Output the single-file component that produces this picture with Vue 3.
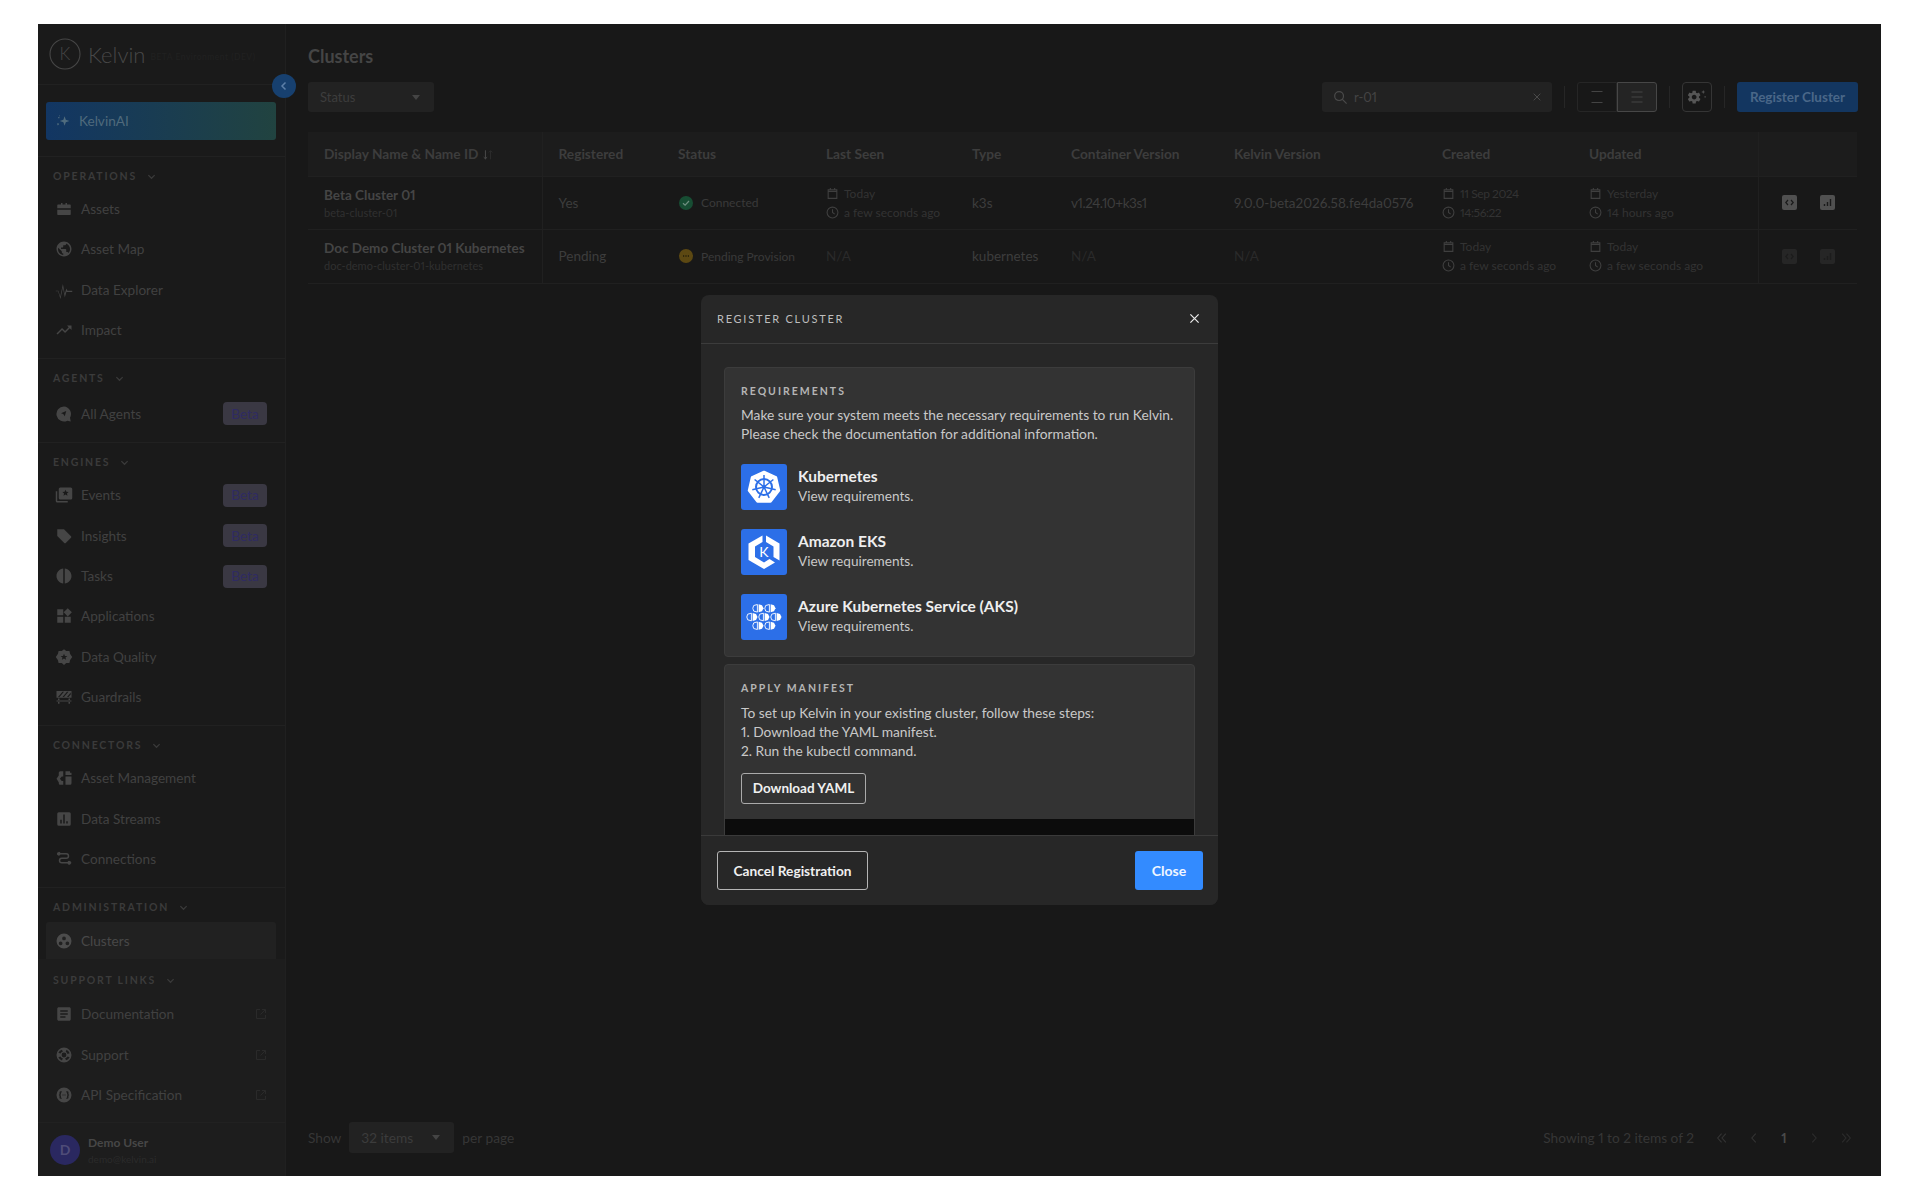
<script setup>
const P = {
  assets: 'M8 4h2v2h4V4h2v2h4a1 1 0 0 1 1 1v4H3V7a1 1 0 0 1 1-1h4zM3 13h18v6a1 1 0 0 1-1 1H4a1 1 0 0 1-1-1z',
  globe: 'M12 2C6.48 2 2 6.48 2 12s4.48 10 10 10 10-4.48 10-10S17.52 2 12 2zm-1 17.93c-3.95-.49-7-3.85-7-7.93 0-.62.08-1.21.21-1.79L9 15v1c0 1.1.9 2 2 2v1.93zm6.9-2.54c-.26-.81-1-1.39-1.9-1.39h-1v-3c0-.55-.45-1-1-1H8v-2h2c.55 0 1-.45 1-1V7h2c1.1 0 2-.9 2-2v-.41c2.93 1.19 5 4.06 5 7.41 0 2.08-.8 3.97-2.1 5.39z',
  wave: 'M1 13h3.500l2.500 8 3.500-17 2.500 13 2.200-7 1.300 3h6.500v1.600h-7.500l-.2-.6-2.200 8-2.600-13.500-3.200 15.500-3.200-10.400H1z',
  trend: 'M16 6l2.29 2.29-4.88 4.88-4-4L2 16.59 3.41 18l6-6 4 4 6.3-6.29L22 12V6z',
  agent: 'M12 2a10 10 0 1 0 4.500 18.900L21 22l-1-5A10 10 0 0 0 12 2zm3 6-2 7-2-3-3-1z',
  events: 'M3 7H1v13a2 2 0 0 0 2 2h14v-2H3zM21 2H7a2 2 0 0 0-2 2v12a2 2 0 0 0 2 2h14a2 2 0 0 0 2-2V4a2 2 0 0 0-2-2zm-7 3 1.200 2.800 3 .2-2.300 2 .8 3-2.700-1.600L11.300 13l.8-3-2.300-2 3-.2z',
  label: 'M3 3h9l9.300 9.300a1.500 1.500 0 0 1 0 2.100l-6.900 6.900a1.500 1.500 0 0 1-2.100 0L3 12z',
  tasks: 'M11 2.100v19.800C6 21.400 2 17.200 2 12s4-9.400 9-9.900zm2 0c5 .5 9 4.700 9 9.900s-4 9.400-9 9.900z',
  apps: 'M3 3h8v8H3zM3 13h8v8H3zM13 13h8v8h-8zM17 1.500 22.500 7 17 12.500 11.500 7z',
  quality: 'M12 1.500 15 4h4.200l1 4L23 12l-2.800 4-1 4H15l-3 2.500L9 20H4.800l-1-4L1 12l2.800-4 1-4H9zm0 6-1.300 3-3.200.2 2.500 2-.8 3.100 2.800-1.700 2.800 1.700-.8-3.100 2.500-2-3.200-.2z',
  guard: 'M2 4h20v9H2zM4 14h2v7H4zM18 14h2v7h-2zM2 16.500h20V18H2zM6 12l6-7h-2l-6 7zM12 12l6-7h-2l-6 7zM18 12l3-3.500V6l-5 6z',
  mgmt: 'M14 8V3h6v2h2v3zM14 10h8v9a2 2 0 0 1-2 2h-6zM11 3v7H9L6.500 13 9 16h2v5H7a2 2 0 0 1-2-2v-1.500L2 13l3-4.500V5a2 2 0 0 1 2-2z',
  streams: 'M5 3h14a2 2 0 0 1 2 2v14a2 2 0 0 1-2 2H5a2 2 0 0 1-2-2V5a2 2 0 0 1 2-2zm2 10v5h2v-5zm4-7v12h2V6zm4 9v3h2v-3z',
  conn: 'M5 2.500A2.500 2.500 0 0 1 7.300 4H15a4 4 0 0 1 0 8H9a2 2 0 0 0 0 4h7.700a2.500 2.500 0 1 1 0 2H9a4 4 0 0 1 0-8h6a2 2 0 0 0 0-4H7.300A2.500 2.500 0 1 1 5 2.500z',
  clusters: 'M12 2a10 10 0 1 0 0 20 10 10 0 0 0 0-20zm0 4a2.500 2.500 0 1 1 0 5 2.500 2.500 0 0 1 0-5zM7.500 12.500a2.500 2.500 0 1 1 0 5 2.500 2.500 0 0 1 0-5zm9 0a2.500 2.500 0 1 1 0 5 2.500 2.500 0 0 1 0-5z',
  doc: 'M19 3H5c-1.100 0-2 .9-2 2v14c0 1.100.9 2 2 2h14c1.100 0 2-.9 2-2V5c0-1.100-.9-2-2-2zm-5 14H7v-2h7v2zm3-4H7v-2h10v2zm0-4H7V7h10v2z',
  support: 'M12 2a10 10 0 1 0 0 20 10 10 0 0 0 0-20zm7.500 7.700-2.800 1.100a5 5 0 0 0-2.400-3.100l1.100-2.800a8 8 0 0 1 4.100 4.800zM12 15.200a3.200 3.200 0 1 1 0-6.400 3.200 3.200 0 0 1 0 6.400zM9.300 4.900l1.100 2.800A5 5 0 0 0 7.300 10L4.500 8.900a8 8 0 0 1 4.800-4zM4.500 15.100l2.800-1.100a5 5 0 0 0 3.100 2.400l-1.100 2.800a8 8 0 0 1-4.800-4.100zm10.200 4-1.100-2.800a5 5 0 0 0 3.100-2.300l2.800 1.100a8 8 0 0 1-4.800 4z',
  api: 'M12 2a10 10 0 1 0 0 20 10 10 0 0 0 0-20zM9 7v1.500H8V11l-1 1 1 1v2.500h1V17H7.500A1.500 1.500 0 0 1 6 15.500V13l-1-1 1-1V8.500A1.500 1.500 0 0 1 7.500 7zm6 0h1.500A1.500 1.500 0 0 1 18 8.500V11l1 1-1 1v2.500a1.500 1.500 0 0 1-1.500 1.500H15v-1.500h1V13l1-1-1-1V8.500h-1zM10 11.300h1.400v1.400H10zm2.600 0H14v1.400h-1.400z',
  gear: 'M19.140 12.940c.04-.3.06-.61.06-.94 0-.32-.02-.64-.07-.94l2.030-1.580c.18-.14.23-.41.12-.61l-1.920-3.320c-.12-.22-.37-.29-.59-.22l-2.390.96c-.5-.38-1.030-.7-1.620-.94l-.36-2.540c-.04-.24-.24-.41-.48-.41h-3.840c-.24 0-.43.17-.47.41l-.36 2.540c-.59.24-1.130.57-1.620.94l-2.390-.96c-.22-.08-.47 0-.59.22L2.740 8.870c-.12.21-.08.47.12.61l2.030 1.580c-.05.3-.09.63-.09.94s.02.64.07.94l-2.030 1.580c-.18.14-.23.41-.12.61l1.920 3.320c.12.22.37.29.59.22l2.390-.96c.5.38 1.030.7 1.620.94l.36 2.540c.05.24.24.41.48.41h3.840c.24 0 .44-.17.47-.41l.36-2.540c.59-.24 1.130-.56 1.620-.94l2.390.96c.22.08.47 0 .59-.22l1.920-3.320c.12-.22.07-.47-.12-.61l-2.010-1.580zM12 15.600c-1.980 0-3.600-1.620-3.600-3.600s1.620-3.600 3.600-3.600 3.600 1.620 3.600 3.600-1.620 3.600-3.600 3.600z'
}
const sections = [
  { title: 'OPERATIONS', items: [['assets', 'Assets'], ['globe', 'Asset Map'], ['wave', 'Data Explorer'], ['trend', 'Impact']] },
  { title: 'AGENTS', tall: true, items: [['agent', 'All Agents', 'Beta']] },
  { title: 'ENGINES', items: [['events', 'Events', 'Beta'], ['label', 'Insights', 'Beta'], ['tasks', 'Tasks', 'Beta'], ['apps', 'Applications'], ['quality', 'Data Quality'], ['guard', 'Guardrails']] },
  { title: 'CONNECTORS', items: [['mgmt', 'Asset Management'], ['streams', 'Data Streams'], ['conn', 'Connections']] }
]
const support = [['doc', 'Documentation'], ['support', 'Support'], ['api', 'API Specification']]
const headers = ['Registered', 'Status', 'Last Seen', 'Type', 'Container Version', 'Kelvin Version', 'Created', 'Updated', '']
const rows = [
  { name: 'Beta Cluster 01', id: 'beta-cluster-01', reg: 'Yes', st: 'Connected', ok: true, seen: ['Today', 'a few seconds ago'], type: 'k3s', cv: 'v1.24.10+k3s1', kv: '9.0.0-beta2026.58.fe4da0576', created: ['11 Sep 2024', '14:56:22'], updated: ['Yesterday', '14 hours ago'] },
  { name: 'Doc Demo Cluster 01 Kubernetes', id: 'doc-demo-cluster-01-kubernetes', reg: 'Pending', st: 'Pending Provision', ok: false, seen: null, type: 'kubernetes', cv: null, kv: null, created: ['Today', 'a few seconds ago'], updated: ['Today', 'a few seconds ago'] }
]
const cubes = [[17, 14.300], [29, 14.300], [11, 23], [23, 23], [35, 23], [17, 31.700], [29, 31.700]]
const spokes = [0, 51.430, 102.860, 154.290, 205.710, 257.140, 308.570]
const services = [['k8s', 'Kubernetes'], ['eks', 'Amazon EKS'], ['aks', 'Azure Kubernetes Service (AKS)']]
</script>

<template>
  <div class="page">
    <div class="app">
      <aside class="side">
        <div class="brand">
          <svg class="logo" viewBox="0 0 32 32" width="32" height="32">
            <circle cx="16" cy="16" r="15" fill="none" stroke="#464646" stroke-width="1.100" />
            <text x="16" y="22" text-anchor="middle" font-size="17" fill="#464646" class="logo-k">K</text>
          </svg>
          <span class="brand-name">Kelvin</span>
          <span class="brand-env">BETA Environment (DEV)</span>
        </div>
        <div class="collapse">
          <svg viewBox="0 0 12 12" width="12" height="12"><path d="M7.500 2.500 4 6l3.500 3.500" fill="none" stroke="#5d7fa8" stroke-width="1.500" /></svg>
        </div>
        <div class="ai-wrap">
          <div class="ai">
            <svg viewBox="0 0 20 20" width="16" height="16"><path d="M12 4l1.500 4.500L18 10l-4.500 1.500L12 16l-1.500-4.500L6 10l4.500-1.500zM4 5h1.500v1.500H4zM2.500 13.500 4 12.500 5 14l-1.500 1.500zM5 3h1v1H5z" fill="#506c7e" /></svg>
            <span>KelvinAI</span>
          </div>
        </div>
        <section v-for="s in sections" :key="s.title" class="sec">
          <div class="sec-title">{{ s.title }}
            <svg viewBox="0 0 10 10" width="9" height="9"><path d="M1.500 3.500 5 7l3.500-3.500" fill="none" stroke="#3a3a3a" stroke-width="1.400" /></svg>
          </div>
          <div v-for="it in s.items" :key="it[1]" class="item" :class="{ tall: s.tall }">
            <svg viewBox="0 0 24 24" width="18" height="18"><path :d="P[it[0]]" fill="#464646" fill-rule="evenodd" /></svg>
            <span class="item-name">{{ it[1] }}</span>
            <span v-if="it[2]" class="beta">{{ it[2] }}</span>
          </div>
        </section>
        <section class="sec admin">
          <div class="sec-title">ADMINISTRATION
            <svg viewBox="0 0 10 10" width="9" height="9"><path d="M1.500 3.500 5 7l3.500-3.500" fill="none" stroke="#3a3a3a" stroke-width="1.400" /></svg>
          </div>
          <div class="item active">
            <svg viewBox="0 0 24 24" width="18" height="18"><path :d="P.clusters" fill="#4c4c4c" fill-rule="evenodd" /></svg>
            <span class="item-name">Clusters</span>
          </div>
        </section>
        <section class="support">
          <div class="sec-title">SUPPORT LINKS
            <svg viewBox="0 0 10 10" width="9" height="9"><path d="M1.500 3.500 5 7l3.500-3.500" fill="none" stroke="#3a3a3a" stroke-width="1.400" /></svg>
          </div>
          <div v-for="it in support" :key="it[1]" class="item">
            <svg viewBox="0 0 24 24" width="18" height="18"><path :d="P[it[0]]" fill="#464646" fill-rule="evenodd" /></svg>
            <span class="item-name">{{ it[1] }}</span>
            <svg class="ext" viewBox="0 0 12 12" width="12" height="12"><path d="M5 1.500H1.500v9h9V7M7 1.500h3.500V5M10.500 1.500 5.500 6.500" fill="none" stroke="#2a2a2a" stroke-width="1" /></svg>
          </div>
        </section>
        <div class="user">
          <div class="avatar">D</div>
          <div class="user-text">
            <div class="user-name">Demo User</div>
            <div class="user-mail">demo@kelvin.ai</div>
          </div>
        </div>
      </aside>

      <main class="main">
        <h1 class="title">Clusters</h1>
        <div class="toolbar">
          <div class="select status-sel"><span>Status</span><i class="caret"></i></div>
          <div class="tools">
            <div class="search">
              <svg viewBox="0 0 16 16" width="15" height="15"><circle cx="6.500" cy="6.500" r="4.700" fill="none" stroke="#4a4a4a" stroke-width="1.300" /><path d="M10 10l4.500 4.500" stroke="#4a4a4a" stroke-width="1.300" /></svg>
              <span class="q">r-01</span>
              <svg viewBox="0 0 12 12" width="10" height="10"><path d="M2 2l8 8M10 2l-8 8" stroke="#4a4a4a" stroke-width="1.200" /></svg>
            </div>
            <i class="vsep"></i>
            <div class="toggle">
              <div class="seg"><svg viewBox="0 0 16 16" width="16" height="16"><path d="M2.500 2.500h11M2.500 13.500h11" stroke="#444" stroke-width="1.100" /></svg></div>
              <div class="seg on"><svg viewBox="0 0 16 16" width="16" height="16"><path d="M2.500 3h11M2.500 8h11M2.500 13h11" stroke="#444" stroke-width="1.100" /></svg></div>
            </div>
            <i class="vsep"></i>
            <div class="cog">
              <svg viewBox="0 0 24 24" width="20" height="20"><g transform="translate(-1 2.500) scale(.8)"><path :d="P.gear" fill="#565656" fill-rule="evenodd" /></g><path d="M19.500 3.500l.7 1.800 1.800.7-1.800.7-.7 1.800-.7-1.800-1.800-.7 1.800-.7zM21 11h1.500v1.500H21z" fill="#565656" /></svg>
            </div>
            <i class="vsep"></i>
            <div class="register">Register Cluster</div>
          </div>
        </div>

        <div class="table-wrap">
          <table class="tbl">
            <colgroup>
              <col style="width:234px" /><col style="width:120px" /><col style="width:148px" /><col style="width:146px" /><col style="width:99px" /><col style="width:163px" /><col style="width:208px" /><col style="width:147px" /><col style="width:185px" /><col style="width:99px" />
            </colgroup>
            <thead>
              <tr>
                <th class="first">Display Name &amp; Name ID
                  <svg viewBox="0 0 14 14" width="12" height="12"><path d="M4 1.500v10M2 9.500l2 2 2-2" fill="none" stroke="#4d4d4d" stroke-width="1.100" /><path d="M10 12V2M8 4l2-2 2 2" fill="none" stroke="#2e2e2e" stroke-width="1.100" /></svg>
                </th>
                <th v-for="(h, i) in headers" :key="i" :class="{ act: i === 8 }">{{ h }}</th>
              </tr>
            </thead>
            <tbody>
              <tr v-for="(r, i) in rows" :key="r.id">
                <td class="first"><div class="nm">{{ r.name }}</div><div class="nid">{{ r.id }}</div></td>
                <td>{{ r.reg }}</td>
                <td>
                  <div class="st">
                    <svg v-if="r.ok" viewBox="0 0 14 14" width="14" height="14"><circle cx="7" cy="7" r="7" fill="#174d33" /><path d="M4 7.200l2.100 2L10 5" fill="none" stroke="#6f8f80" stroke-width="1.200" /></svg>
                    <svg v-else viewBox="0 0 14 14" width="14" height="14"><circle cx="7" cy="7" r="7" fill="#5c4812" /><path d="M4 7h1.200M6.400 7h1.200M8.800 7H10" stroke="#231d0a" stroke-width="1.400" /></svg>
                    <span>{{ r.st }}</span>
                  </div>
                </td>
                <td>
                  <div v-if="r.seen" class="dates">
                    <div><svg viewBox="0 0 12 12" width="13" height="13"><path d="M2 2.500h8v8H2zM2 4h8M4 1v2M8 1v2" fill="none" stroke="#3f3f3f" /></svg>{{ r.seen[0] }}</div>
                    <div><svg viewBox="0 0 12 12" width="13" height="13"><circle cx="6" cy="6" r="5" fill="none" stroke="#3f3f3f" /><path d="M6 3v3l2 1.500" fill="none" stroke="#3f3f3f" /></svg>{{ r.seen[1] }}</div>
                  </div>
                  <span v-else class="na">N/A</span>
                </td>
                <td>{{ r.type }}</td>
                <td><span v-if="r.cv" class="tight">{{ r.cv }}</span><span v-else class="na">N/A</span></td>
                <td><span v-if="r.kv">{{ r.kv }}</span><span v-else class="na">N/A</span></td>
                <td>
                  <div class="dates">
                    <div><svg viewBox="0 0 12 12" width="13" height="13"><path d="M2 2.500h8v8H2zM2 4h8M4 1v2M8 1v2" fill="none" stroke="#3f3f3f" /></svg><span :class="{ tight: i === 0 }">{{ r.created[0] }}</span></div>
                    <div><svg viewBox="0 0 12 12" width="13" height="13"><circle cx="6" cy="6" r="5" fill="none" stroke="#3f3f3f" /><path d="M6 3v3l2 1.500" fill="none" stroke="#3f3f3f" /></svg><span :class="{ tight: i === 0 }">{{ r.created[1] }}</span></div>
                  </div>
                </td>
                <td>
                  <div class="dates">
                    <div><svg viewBox="0 0 12 12" width="13" height="13"><path d="M2 2.500h8v8H2zM2 4h8M4 1v2M8 1v2" fill="none" stroke="#3f3f3f" /></svg>{{ r.updated[0] }}</div>
                    <div><svg viewBox="0 0 12 12" width="13" height="13"><circle cx="6" cy="6" r="5" fill="none" stroke="#3f3f3f" /><path d="M6 3v3l2 1.500" fill="none" stroke="#3f3f3f" /></svg>{{ r.updated[1] }}</div>
                  </div>
                </td>
                <td class="act">
                  <div class="acts" :class="{ off: i === 1 }">
                    <svg viewBox="0 0 15 15" width="15" height="15"><rect width="15" height="15" rx="2" class="afill" /><path d="M6 5 3.800 7.500 6 10M9 5l2.200 2.500L9 10" fill="none" class="astroke" stroke-width="1.200" /></svg>
                    <svg viewBox="0 0 15 15" width="15" height="15"><rect width="15" height="15" rx="2" class="afill" /><path d="M4.500 9v2M7.500 7v4M10.500 4v7" fill="none" class="astroke" stroke-width="1.400" /></svg>
                  </div>
                </td>
              </tr>
            </tbody>
          </table>
        </div>

        <div class="pager">
          <div class="pg-left">
            <span>Show</span>
            <div class="select count-sel"><span>32 items</span><i class="caret"></i></div>
            <span>per page</span>
          </div>
          <div class="pg-right">
            <span class="showing">Showing 1 to 2 items of 2</span>
            <div class="pg-nav">
              <svg viewBox="0 0 14 14" width="12" height="12"><path d="M6.500 2 2 7l4.500 5M11.500 2 7 7l4.500 5" fill="none" stroke="#333" stroke-width="1.300" /></svg>
              <svg viewBox="0 0 14 14" width="12" height="12"><path d="M9 2 4.500 7 9 12" fill="none" stroke="#333" stroke-width="1.300" /></svg>
              <b>1</b>
              <svg viewBox="0 0 14 14" width="12" height="12"><path d="M5 2l4.500 5L5 12" fill="none" stroke="#2c2c2c" stroke-width="1.300" /></svg>
              <svg viewBox="0 0 14 14" width="12" height="12"><path d="M2.500 2 7 7l-4.500 5M7.500 2 12 7l-4.500 5" fill="none" stroke="#2c2c2c" stroke-width="1.300" /></svg>
            </div>
          </div>
        </div>
      </main>

      <div class="modal">
        <header class="m-head">
          <span>REGISTER CLUSTER</span>
          <svg viewBox="0 0 12 12" width="11" height="11"><path d="M1.500 1.500l9 9M10.500 1.500l-9 9" stroke="#e6e6e6" stroke-width="1.400" /></svg>
        </header>
        <div class="m-body">
          <div class="card">
            <h3>REQUIREMENTS</h3>
            <p>Make sure your system meets the necessary requirements to run Kelvin.<br />Please check the documentation for additional information.</p>
            <div class="svc" v-for="s in services" :key="s[0]">
              <svg class="svc-ic" viewBox="0 0 46 46" width="46" height="46">
                <rect width="46" height="46" rx="3" fill="#2c6fe8" />
                <g v-if="s[0] === 'k8s'">
                  <path d="M23 8 35 13.500 38 26.500 29.500 37.500H16.500L8 26.500 11 13.500Z" fill="#fff" stroke="#fff" stroke-width="2.500" stroke-linejoin="round" />
                  <circle cx="23" cy="23" r="8" fill="none" stroke="#2c6fe8" stroke-width="2" />
                  <circle cx="23" cy="23" r="2" fill="#2c6fe8" />
                  <path v-for="a in spokes" :key="a" d="M23 23V11" stroke="#2c6fe8" stroke-width="1.500" :transform="`rotate(${a} 23 23)`" />
                </g>
                <g v-else-if="s[0] === 'eks'">
                  <path d="M21.500 6.500 7.500 14.500V31L23 40 34 33.500 28.500 30 23 33.500 14 28V17.500L21.500 13Z" fill="#fff" />
                  <path d="M25 6.500 38.500 14.500V31.500L32.500 28V17.500L25 13Z" fill="#fff" />
                  <text x="23" y="28" text-anchor="middle" font-size="14" fill="#fff" class="svc-k">K</text>
                </g>
                <g v-else>
                  <g v-for="(c, i) in cubes" :key="i" :transform="`translate(${c[0]} ${c[1]})`">
                    <path d="M-.6-3.800-4.300-2.800-5.200 0-4.300 2.800-.6 3.800Z" fill="none" stroke="#fff" stroke-width=".9" />
                    <path d="M.6-4 4-3 5.500 0 4 3 .6 4Z" fill="#fff" />
                  </g>
                </g>
              </svg>
              <div class="svc-text">
                <div class="svc-name">{{ s[1] }}</div>
                <div class="svc-sub">View requirements.</div>
              </div>
            </div>
          </div>
          <div class="card manifest">
            <h3>APPLY MANIFEST</h3>
            <p>To set up Kelvin in your existing cluster, follow these steps:<br />1. Download the YAML manifest.<br />2. Run the kubectl command.</p>
            <div class="dl">Download YAML</div>
            <div class="code"></div>
          </div>
        </div>
        <footer class="m-foot">
          <div class="btn-out">Cancel Registration</div>
          <div class="btn-pri">Close</div>
        </footer>
      </div>
    </div>
  </div>
</template>

<style>
html, body { margin: 0; background: #fff; }
</style>

<style scoped>
.page { padding: 24px 39px 24px 38px; height: 1200px; box-sizing: border-box; font-family: "Lato", "Liberation Sans", sans-serif; font-feature-settings: "pnum"; }
.app { position: relative; display: flex; height: 1152px; background: #181818; overflow: hidden; }

.side { position: relative; width: 247px; flex: none; display: flex; flex-direction: column; background: #1a1a1a; border-right: 1px solid #202020; }
.brand { height: 61px; box-sizing: border-box; flex: none; display: flex; align-items: center; padding: 0 0 0 11px; border-bottom: 1px solid #212121; white-space: nowrap; overflow: hidden; }
.logo-k { font-family: "Lato", sans-serif; font-weight: 300; }
.brand-name { margin-left: 7px; font-size: 22px; font-weight: 300; color: #484848; }
.brand-env { margin: 6px 0 0 5px; font-size: 8.500px; letter-spacing: .5px; color: #212121; }
.collapse { position: absolute; left: 234px; top: 50px; width: 24px; height: 24px; border-radius: 50%; background: #17406f; display: flex; align-items: center; justify-content: center; z-index: 2; }
.ai-wrap { flex: none; padding: 17px 9px 16px 8px; border-bottom: 1px solid #212121; }
.ai { height: 38px; display: flex; align-items: center; gap: 8px; padding-left: 9px; border-radius: 3px; background: linear-gradient(90deg, #123663, #214340); color: #4f6a7c; font-size: 13.600px; }

.sec { flex: none; padding-bottom: 8px; border-bottom: 1px solid #212121; }
.sec.admin { padding-bottom: 0; border-bottom: 0; }
.sec-title { display: flex; align-items: center; gap: 10px; height: 14px; padding: 12px 0 6px 15px; font-size: 10.500px; font-weight: 700; letter-spacing: 1.800px; color: #3b3b3b; }
.admin .sec-title { padding-bottom: 8px; }
.support .sec-title { padding-top: 14px; padding-bottom: 7px; }
.item { height: 40.330px; display: flex; align-items: center; padding: 0 9px 0 17px; gap: 8px; color: #414141; font-size: 13.600px; }
.item.tall { height: 43px; box-sizing: border-box; padding-top: 2px; }
.item-name { flex: 1; }
.item.active { height: 37px; margin: 0 9px 0 8px; padding: 0 0 0 9px; background: #212121; border-radius: 3px 3px 0 0; color: #484848; }
.beta { width: 44px; height: 23px; margin-right: 9px; border-radius: 4px; background: #3a3843; color: #2f2b62; font-size: 13.600px; display: flex; align-items: center; justify-content: center; }
.ext { margin-right: 9px; }
.support { flex: 1; background: #1d1d1d; }
.user { flex: none; height: 54px; box-sizing: border-box; display: flex; align-items: center; gap: 8px; padding-left: 12px; background: #1d1d1d; border-top: 1px solid #212121; }
.avatar { width: 30px; height: 30px; border-radius: 50%; background: #2a2860; color: #4f4c78; display: flex; align-items: center; justify-content: center; font-size: 14px; font-weight: 700; }
.user-name { font-size: 12px; font-weight: 700; color: #474747; }
.user-mail { margin-top: 3px; font-size: 10px; color: #2b2b2b; }

.main { flex: 1; min-width: 0; display: flex; flex-direction: column; padding: 0 23px 23px 22px; }
.title { margin: 21px 0 0; height: 22px; line-height: 22px; font-size: 18px; font-weight: 700; color: #454545; }
.toolbar { display: flex; justify-content: space-between; align-items: center; margin-top: 15px; height: 30px; }
.select { position: relative; display: flex; align-items: center; background: #222; border-radius: 3px; color: #3d3d3d; font-size: 13px; box-sizing: border-box; }
.caret { width: 0; height: 0; border-left: 4px solid transparent; border-right: 4px solid transparent; border-top: 5px solid #444; }
.status-sel { width: 126px; height: 30px; justify-content: space-between; padding: 0 14px 0 12px; }
.tools { display: flex; align-items: center; }
.search { width: 230px; height: 30px; box-sizing: border-box; display: flex; align-items: center; gap: 6px; padding: 0 10px 0 11px; background: #222; border-radius: 3px; }
.q { flex: 1; font-size: 13px; color: #444; }
.vsep { width: 1px; height: 22px; margin: 0 12px; background: #262626; }
.toggle { display: flex; width: 80px; height: 30px; }
.seg { flex: 1; display: flex; align-items: center; justify-content: center; border: 1px solid #262626; border-radius: 3px 0 0 3px; box-sizing: border-box; }
.seg.on { border: 1px solid #474747; border-radius: 0 3px 3px 0; background: #242424; }
.cog { width: 30px; height: 30px; box-sizing: border-box; border: 1px solid #353535; border-radius: 4px; display: flex; align-items: center; justify-content: center; }
.register { width: 121px; height: 30px; border-radius: 3px; background: #133660; color: #4a6788; font-size: 13.500px; font-weight: 700; display: flex; align-items: center; justify-content: center; }

.table-wrap { flex: 1; margin-top: 20px; }
.tbl { table-layout: fixed; width: 1549px; border-collapse: collapse; font-size: 13.500px; color: #3d3d3d; }
th { height: 44px; box-sizing: border-box; padding: 0 0 0 16px; text-align: left; font-weight: 700; font-size: 13.700px; color: #3d3d3d; background: #1c1c1c; border-bottom: 1px solid #202020; white-space: nowrap; }
th.first svg { vertical-align: -2px; }
td { height: 53.500px; box-sizing: border-box; padding: 0 0 0 16px; border-bottom: 1px solid #202020; white-space: nowrap; }
.first { border-right: 1px solid #202020; }
.act { border-left: 1px solid #202020; }
.nm { font-weight: 700; font-size: 13.500px; color: #454545; }
.nid { margin-top: 3px; font-size: 11px; color: #303030; }
.st { display: flex; align-items: center; gap: 8px; padding-left: 1px; font-size: 12px; color: #3a3a3a; }
.dates { display: flex; flex-direction: column; gap: 5px; font-size: 12px; color: #333; }
.dates div { display: flex; align-items: center; gap: 5px; height: 14px; }
.tight { letter-spacing: -.45px; }
.na { color: #2a2a2a; }
.acts { display: flex; gap: 23px; padding-left: 7px; }
.afill { fill: #505050; }
.astroke { stroke: #1a1a1a; }
.off .afill { fill: #262626; }
.off .astroke { stroke: #1c1c1c; }

.pager { flex: none; height: 31px; display: flex; justify-content: space-between; align-items: center; font-size: 13.700px; color: #363636; }
.pg-left { display: flex; align-items: center; gap: 8px; }
.count-sel { width: 105px; height: 31px; justify-content: space-between; padding: 0 14px 0 12px; color: #3c3c3c; font-size: 13.700px; }
.pg-right { display: flex; align-items: center; }
.showing { margin-right: 22px; }
.pg-nav { display: flex; align-items: center; gap: 20px; margin-right: 6px; }
.pg-nav b { width: 8px; text-align: center; color: #4a4a4a; font-size: 13px; }

.modal { position: absolute; left: 663px; top: 271px; width: 517px; height: 610px; display: flex; flex-direction: column; background: #272727; border-radius: 8px; overflow: hidden; }
.m-head { flex: none; height: 49px; box-sizing: border-box; display: flex; align-items: center; justify-content: space-between; padding: 0 18px 2px 16px; border-bottom: 1px solid #3c3c3c; font-size: 11px; letter-spacing: 1.750px; color: #bdbdbd; }
.m-body { flex: 1; min-height: 0; overflow: hidden; padding: 23px 23px 0; }
.card { background: #333; border: 1px solid #3c3c3c; border-radius: 4px; padding: 16px 16px 15.500px; margin-bottom: 7px; box-sizing: border-box; }
h3 { margin: 0; font-size: 10.500px; line-height: 14px; letter-spacing: 2px; font-weight: 700; color: #b5b5b5; }
p { margin: 7px 0 0; font-size: 13.770px; line-height: 19.200px; color: #c9c9c9; }
.svc { display: flex; align-items: center; gap: 11px; margin-top: 19px; }
.svc:first-of-type { margin-top: 21px; }
.svc-ic { flex: none; }
.svc-k { font-family: "Lato", sans-serif; font-weight: 400; }
.svc-text { margin-top: -2px; }
.svc-name { font-size: 15.500px; font-weight: 700; color: #eee; line-height: 20px; }
.svc-sub { font-size: 13.600px; color: #c9c9c9; line-height: 20px; }
.manifest { padding-bottom: 0; }
.manifest p { margin-top: 8px; }
.dl { width: 125px; height: 31px; box-sizing: border-box; margin-top: 12px; border: 1px solid #aaa; border-radius: 3px; display: flex; align-items: center; justify-content: center; font-size: 13.500px; font-weight: 700; color: #f0f0f0; }
.code { height: 60px; margin: 15px -16px 0; background: #0c0c0c; }
.m-foot { flex: none; height: 70px; box-sizing: border-box; display: flex; justify-content: space-between; align-items: center; padding: 0 15px 0 16px; border-top: 1px solid #3a3a3a; background: #272727; }
.btn-out { width: 151px; height: 39px; box-sizing: border-box; border: 1px solid #b5b5b5; border-radius: 3px; display: flex; align-items: center; justify-content: center; font-size: 13.700px; font-weight: 700; color: #f0f0f0; }
.btn-pri { width: 68px; height: 39px; border-radius: 3px; background: #338bff; color: #f0f6ff; display: flex; align-items: center; justify-content: center; font-size: 14px; font-weight: 700; }
</style>
